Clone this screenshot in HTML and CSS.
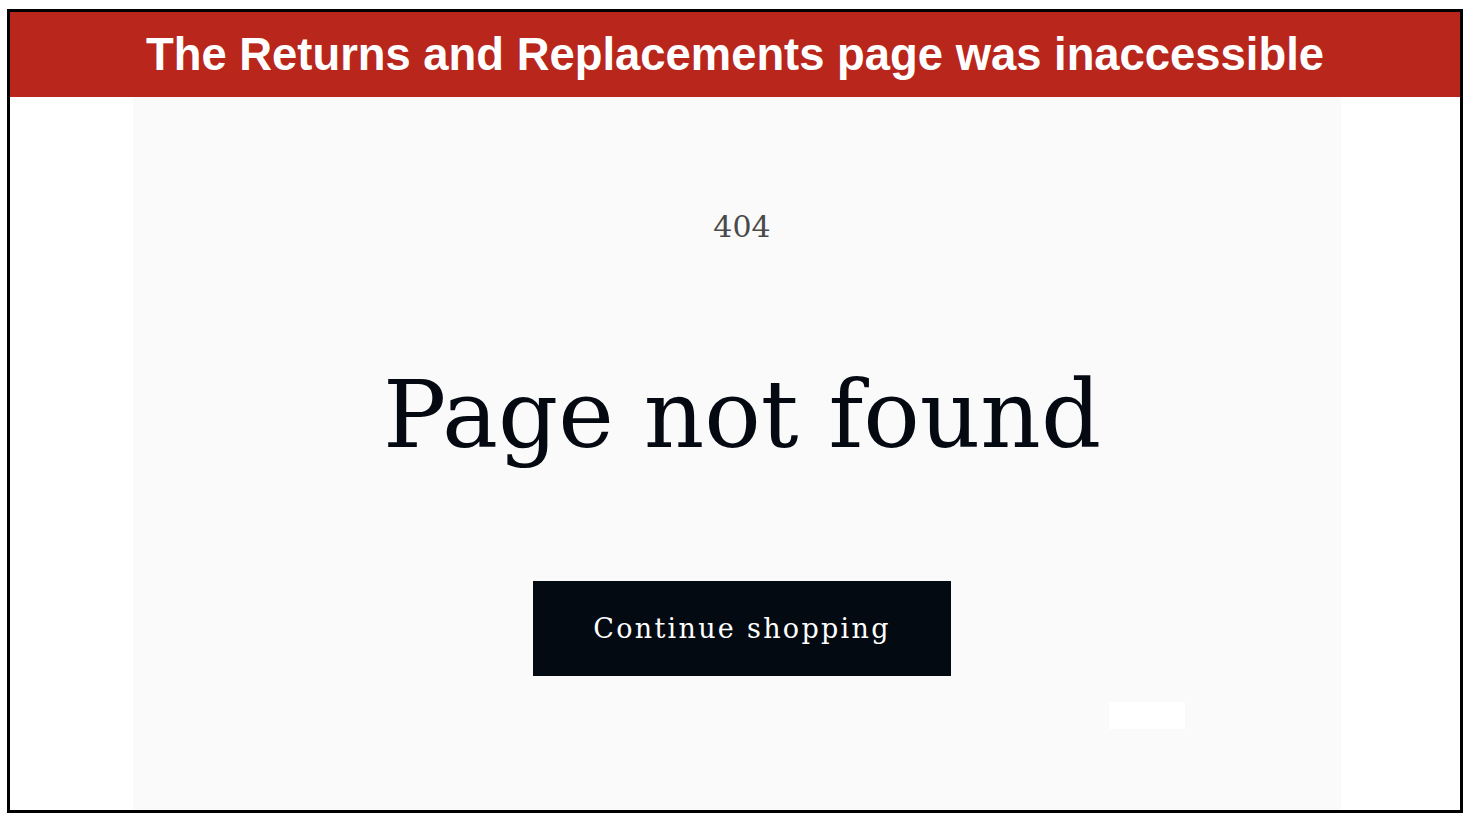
FILE: index.html
```html
<!DOCTYPE html>
<html lang="en">
<head>
  <meta charset="UTF-8">
  <title>Returns and Replacements</title>
  <link rel="stylesheet" href="styles.css">
</head>
<body>
  <div class="frame">
    <div class="banner"><h1>The Returns and Replacements page was inaccessible</h1></div>

    <div class="shot">
      <div class="page">
        <p class="code">404</p>
        <h2 class="title">Page not found</h2>
        <a class="btn" href="#">Continue shopping</a>
        <div class="blank"></div>
      </div>
    </div>
  </div>
</body>
</html>
```

FILE: styles.css
```css
* {
  margin: 0;
  padding: 0;
  box-sizing: border-box;
}

body {
  background: #fff;
}

.frame {
  margin: 9px 0 0 7px;
  width: 1456px;
  height: 804px;
  border: 3px solid #000;
  display: flex;
  flex-direction: column;
}

.banner {
  height: 85px;
  background-color: #b9261c;
  display: flex;
  align-items: center;
  justify-content: center;
}

.banner h1 {
  font-family: "Liberation Sans", Arial, sans-serif;
  font-weight: bold;
  font-size: 45.4px;
  color: #fff;
}

.shot {
  flex: 1;
  display: flex;
}

.page {
  position: relative;
  margin-left: 123px;
  width: 1208px;
  background: #fafafa;
  display: flex;
  flex-direction: column;
  align-items: center;
  padding: 115px 0 0 10px;
  font-family: "DejaVu Serif", serif;
}

.code {
  font-size: 30px;
  line-height: 1;
  color: #4a4a4a;
}

.title {
  margin-top: 126px;
  font-size: 94px;
  line-height: 1;
  font-weight: normal;
  color: #050a12;
}

.btn {
  margin-top: 119px;
  width: 418px;
  height: 95px;
  background: #030a12;
  color: #fff;
  text-decoration: none;
  font-size: 27px;
  letter-spacing: 2.3px;
  display: flex;
  align-items: center;
  justify-content: center;
}

.blank {
  position: absolute;
  left: 976px;
  top: 605px;
  width: 76px;
  height: 27px;
  background: #fff;
}
```
